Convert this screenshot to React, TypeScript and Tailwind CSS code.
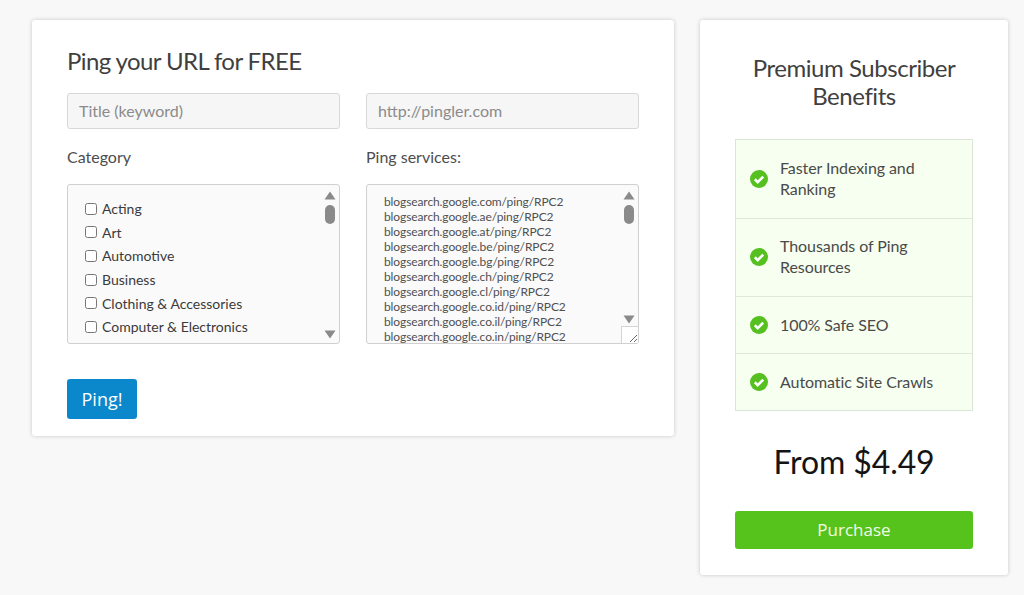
const categories = ["Acting", "Art", "Automotive", "Business", "Clothing & Accessories", "Computer & Electronics"];

const services = ["com", "ae", "at", "be", "bg", "ch", "cl", "co.id", "co.il", "co.in"];

const benefits = [
  { label: ["Faster Indexing and", "Ranking"], tall: true },
  { label: ["Thousands of Ping", "Resources"], tall: true },
  { label: ["100% Safe SEO"], tall: false },
  { label: ["Automatic Site Crawls"], tall: false },
];

function Scrollbar({ resizer = false }: { resizer?: boolean }) {
  return (
    <div className="absolute top-0 right-0 bottom-0 w-[18px] flex flex-col items-center pt-[6px]">
      <svg width="12" height="9" viewBox="0 0 12 9">
        <path d="M6 0.5 L11.5 8.5 H0.5 Z" fill="#8a8a8a" />
      </svg>
      <div className="w-[10px] h-[19px] mt-[5px] rounded-[5px] bg-[#8a8a8a]" />
      <svg width="12" height="9" viewBox="0 0 12 9" className={resizer ? "mt-[91px]" : "mt-[106px]"}>
        <path d="M0.5 0.5 H11.5 L6 8.5 Z" fill="#8a8a8a" />
      </svg>
      {resizer && (
        <div className="absolute right-0 bottom-0 w-[17px] h-[17px] bg-white border-t border-l border-[#d4d4d4] flex items-end justify-end">
          <svg width="11" height="11" viewBox="0 0 11 11">
            <path d="M3 10 L10 3 M7 10 L10 7" stroke="#666666" strokeWidth="1" fill="none" />
          </svg>
        </div>
      )}
    </div>
  );
}

function CheckCircle() {
  return (
    <svg width="18" height="18" viewBox="0 0 18 18" className="shrink-0">
      <circle cx="9" cy="9" r="9" fill="#55c01f" />
      <path d="M4.8 9.3 L7.7 12.1 L13.2 6.6" stroke="#ffffff" strokeWidth="2.6" fill="none" />
    </svg>
  );
}

export default function App() {
  return (
    <div
      className="w-[1024px] h-[595px] overflow-hidden bg-[#f8f8f8] flex items-start gap-[26px] pt-[20px] pl-[32px]"
      style={{ fontFamily: "Lato, sans-serif" }}
    >
      <div className="w-[642px] h-[416px] bg-white rounded-[3px] shadow-[0_0_4px_rgba(0,0,0,0.2)] pt-[25px] px-[35px]">
        <h1 className="text-[24px] leading-[32px] tracking-[-0.6px] text-[#3f3f3f]">Ping your URL for FREE</h1>

        <div className="grid grid-cols-[273px_273px] gap-x-[26px] mt-[16px]">
          <div className="h-[36px] bg-[#f6f6f6] border border-[#d8d8d8] rounded-[3px] flex items-center px-[11px] text-[16px] text-[#8b8b8b]">
            Title (keyword)
          </div>
          <div className="h-[36px] bg-[#f6f6f6] border border-[#d8d8d8] rounded-[3px] flex items-center px-[11px] text-[16px] text-[#8b8b8b]">
            http://pingler.com
          </div>

          <div className="mt-[17px] h-[22px] text-[16px] leading-[22px] text-[#4d4d4d]">Category</div>
          <div className="mt-[17px] h-[22px] text-[16px] leading-[22px] text-[#4d4d4d]">Ping services:</div>

          <div className="relative mt-[16px] h-[160px] overflow-hidden bg-[#fafafa] border border-[#d0d0d0] rounded-[3px] pt-[12px] pl-[17px]">
            {categories.map((name) => (
              <label key={name} className="h-[23.6px] flex items-center gap-[5px] text-[14px] text-[#3a3a3a]">
                <input type="checkbox" className="w-[12px] h-[12px] m-0 accent-[#555555]" />
                {name}
              </label>
            ))}
            <Scrollbar />
          </div>

          <div className="relative mt-[16px] h-[160px] overflow-hidden bg-[#fafafa] border border-[#d0d0d0] rounded-[3px] pt-[9px] pl-[17px] text-[12px] leading-[15px] tracking-[-0.1px] text-[#505050]">
            {services.map((tld) => (
              <div key={tld}>blogsearch.google.{tld}/ping/RPC2</div>
            ))}
            <Scrollbar resizer />
          </div>
        </div>

        <button
          className="block mt-[35px] w-[70px] h-[40px] rounded-[3px] bg-[#0a88cb] text-white text-[18px]"
          style={{ fontFamily: "'Open Sans', sans-serif" }}
        >
          Ping!
        </button>
      </div>

      <div className="w-[308px] h-[555px] bg-white rounded-[3px] shadow-[0_0_4px_rgba(0,0,0,0.2)] pt-[34px] px-[35px]">
        <h2 className="text-[24px] leading-[28px] tracking-[-0.45px] text-center text-[#3f3f3f]">
          Premium Subscriber
          <br />
          Benefits
        </h2>

        <ul className="mt-[29px] border border-[#dbe5d5] bg-[#f6fff0] divide-y divide-[#dfe8da]">
          {benefits.map((b) => (
            <li
              key={b.label[0]}
              className={
                b.tall
                  ? "h-[78.5px] flex items-center gap-[12px] pl-[14px] text-[16px] leading-[21px] tracking-[-0.08px] text-[#4a4a4a]"
                  : "h-[56.5px] flex items-center gap-[12px] pl-[14px] text-[16px] leading-[21px] tracking-[-0.08px] text-[#4a4a4a]"
              }
            >
              <CheckCircle />
              <div className={b.tall ? "pb-[2px]" : ""}>
                {b.label.map((line) => (
                  <div key={line}>{line}</div>
                ))}
              </div>
            </li>
          ))}
        </ul>

        <div className="mt-[30px] text-[32px] leading-[42px] tracking-[-0.1px] text-center text-[#141414]">From $4.49</div>

        <button
          className="block mt-[28px] w-full h-[38px] rounded-[3px] bg-[#56c31d] text-[#f2fbe8] text-[17px]"
          style={{ fontFamily: "'Open Sans', sans-serif" }}
        >
          Purchase
        </button>
      </div>
    </div>
  );
}
